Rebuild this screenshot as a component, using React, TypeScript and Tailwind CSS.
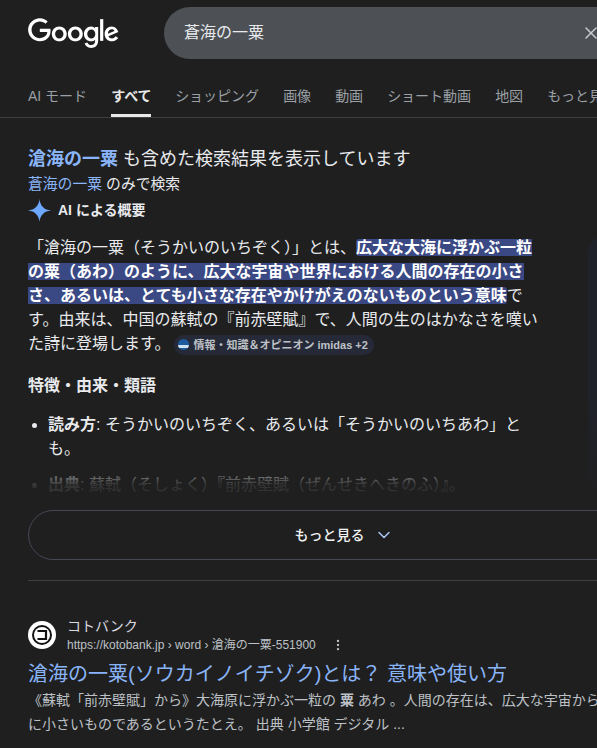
import React from "react";
import { X, ChevronDown, EllipsisVertical } from "lucide-react";

const tabs = ["ショッピング", "画像", "動画", "ショート動画", "地図", "もっと見る"];

function Logo() {
  return (
    <svg viewBox="0 0 272 92" className="w-[91px] h-[31px] shrink-0" fill="#fff">
      <path d="M115.75 47.18c0 12.77-9.99 22.18-22.25 22.18s-22.25-9.41-22.25-22.18C71.25 34.32 81.24 25 93.5 25s22.25 9.32 22.25 22.18zm-9.74 0c0-7.98-5.79-13.44-12.51-13.44S80.99 39.2 80.99 47.18c0 7.9 5.79 13.44 12.51 13.44s12.51-5.55 12.51-13.44z" />
      <path d="M163.75 47.18c0 12.77-9.99 22.18-22.25 22.18s-22.25-9.41-22.25-22.18c0-12.85 9.99-22.18 22.25-22.18s22.25 9.32 22.25 22.18zm-9.74 0c0-7.98-5.79-13.44-12.51-13.44s-12.51 5.46-12.51 13.44c0 7.9 5.79 13.44 12.51 13.44s12.51-5.55 12.51-13.44z" />
      <path d="M209.75 26.34v39.82c0 16.38-9.66 23.07-21.08 23.07-10.75 0-17.22-7.19-19.66-13.07l8.48-3.53c1.51 3.61 5.21 7.87 11.17 7.87 7.31 0 11.84-4.51 11.84-13v-3.19h-.34c-2.18 2.69-6.38 5.04-11.68 5.04-11.09 0-21.25-9.66-21.25-22.09 0-12.52 10.16-22.26 21.25-22.26 5.29 0 9.49 2.35 11.68 4.96h.34v-3.61h9.25zm-8.56 20.92c0-7.81-5.21-13.52-11.84-13.52-6.72 0-12.35 5.71-12.35 13.52 0 7.73 5.63 13.36 12.35 13.36 6.63 0 11.84-5.63 11.84-13.36z" />
      <path d="M225 3v65h-9.5V3h9.5z" />
      <path d="M262.02 54.48l7.56 5.04c-2.44 3.61-8.32 9.83-18.48 9.83-12.6 0-22.01-9.74-22.01-22.18 0-13.19 9.49-22.18 20.92-22.18 11.51 0 17.14 9.16 18.98 14.11l1.01 2.52-29.65 12.28c2.27 4.45 5.8 6.72 10.75 6.72 4.96 0 8.4-2.44 10.92-6.14zm-23.27-7.98l19.82-8.23c-1.09-2.77-4.37-4.7-8.23-4.7-4.95 0-11.84 4.37-11.59 12.93z" />
      <path d="M35.29 41.41V32H67c.31 1.64.47 3.58.47 5.68 0 7.06-1.93 15.79-8.15 22.01-6.05 6.3-13.78 9.66-24.02 9.66C16.32 69.35.36 53.89.36 34.91.36 15.93 16.32.47 35.3.47c10.5 0 17.98 4.12 23.6 9.49l-6.64 6.64c-4.03-3.78-9.49-6.72-16.97-6.72-13.86 0-24.7 11.17-24.7 25.03 0 13.86 10.84 25.03 24.7 25.03 8.99 0 14.11-3.61 17.39-6.89 2.66-2.66 4.41-6.46 5.1-11.65l-22.49.01z" />
    </svg>
  );
}

export default function App() {
  const hl = "bg-[#3a4883] text-white font-bold rounded-[3px]";
  return (
    <div className="w-[597px] h-[748px] overflow-hidden bg-[#1f1f1f] text-[#e8eaed] font-['Liberation_Sans','Noto_Sans_CJK_JP',sans-serif]">
      <header className="w-[800px] flex items-center pt-[7px] pl-[28px]">
        <Logo />
        <div className="ml-[45px] w-[560px] h-[52px] rounded-l-[26px] bg-[#4d5156] flex items-center pl-[20px] text-[16px] text-[#e8eaed]">
          <span>蒼海の一粟</span>
          <X className="ml-[317px] w-[20px] h-[20px] text-[#c8c9cb]" strokeWidth={1.8} />
        </div>
      </header>

      <nav className="w-[800px] mt-[20px] h-[31px] border-b border-[#3c4043] pl-[28px] flex gap-[24px] text-[14px] leading-[20px] text-[#9aa0a6] pt-[7px] box-content">
        <span className="h-[31px] whitespace-nowrap">AI モード</span>
        <span className="relative w-[40px] h-[31px] whitespace-nowrap font-bold text-[#e8e8e8]">
          すべて
          <span className="absolute left-0 right-0 top-[28px] h-[3px] bg-[#e8e8e8]" />
        </span>
        {tabs.map((t) => (
          <span key={t} className="h-[31px] whitespace-nowrap">{t}</span>
        ))}
      </nav>

      <main className="pl-[28px] w-[800px]">
        <p className="mt-[29px] text-[18px] leading-[24px] text-[#e8eaed]">
          <span className="font-bold text-[#8ab4f8]">滄海の一粟</span> も含めた検索結果を表示しています
        </p>
        <p className="mt-[2px] text-[14.8px] leading-[22px]">
          <span className="text-[#8ab4f8]">蒼海の一粟</span> のみで検索
        </p>
        <div className="mt-[2px] flex items-center h-[26px] gap-[7px]">
          <svg viewBox="0 0 24 24" className="w-[23px] h-[23px]" fill="#6ea8fe">
            <path d="M12 0C12.6 7 17 11.400 24 12 17 12.600 12.600 17 12 24 11.400 17 7 12.600 0 12 7 11.400 11.400 7 12 0Z" />
          </svg>
          <span className="text-[14px] font-bold text-[#e8eaed]">AI による概要</span>
        </div>

        <div className="flex">
          <div className="relative w-[512px] h-[287px] overflow-hidden shrink-0">
            <p className="mt-[13px] text-[16px] leading-[24px]">
              「滄海の一粟（そうかいのいちぞく）」とは、
              <span className={hl}>広大な大海に浮かぶ一粒の粟（あわ）のように、広大な宇宙や世界における人間の存在の小ささ、あるいは、とても小さな存在やかけがえのないものという意味</span>
              です。由来は、中国の蘇軾の『前赤壁賦』で、人間の生のはかなさを嘆いた詩に登場します。
              <span className="inline-flex items-center align-middle ml-[4px] h-[20px] rounded-full bg-[#262a38] pl-[4px] pr-[6px] gap-[4px] text-[11px] font-bold text-[#bdc1c6]">
                <span className="w-[11px] h-[11px] rounded-full bg-[#1c5b9e] flex items-end overflow-hidden">
                  <span className="w-full h-[3px] mb-[2px] bg-[#cfe2f5]" />
                </span>
                情報・知識＆オピニオン imidas +2
              </span>
            </p>
            <p className="mt-[18px] text-[16px] leading-[24px] font-bold">特徴・由来・類語</p>
            <ul className="mt-[15px] list-disc pl-[20px] text-[16px] leading-[24px]">
              <li>
                <b>読み方</b>: そうかいのいちぞく、あるいは「そうかいのいちあわ」とも。
              </li>
              <li className="mt-[12px]">
                <b>出典</b>: 蘇軾（そしょく）『前赤壁賦（ぜんせきへきのふ）』。
              </li>
            </ul>
            <div className="absolute left-0 right-0 bottom-0 h-[50px] bg-gradient-to-b from-[#1f1f1f00] to-[#1f1f1fe6] to-50%" />
          </div>
          <div className="ml-[48px] mt-[14px] w-[200px] h-[263px] rounded-tl-[16px] bg-gradient-to-b from-[#1f222a] from-60% to-[#1f1f1f]" />
        </div>

        <button className="w-[632px] h-[50px] rounded-full border border-[#444857] flex items-center justify-center gap-[9px] text-[14px] font-medium text-[#f1f3f4]">
          もっと見る
          <ChevronDown className="w-[20px] h-[20px] text-[#a8c7fa]" strokeWidth={1.8} />
        </button>
        <div className="mt-[20px] h-px bg-[#3c4043]" />

        <div className="mt-[35px] flex items-center gap-[11px]">
          <svg viewBox="0 0 28 28" className="w-[28px] h-[28px] shrink-0">
            <circle cx="14" cy="14" r="14" fill="#fff" />
            <circle cx="14" cy="14" r="10" fill="#111" />
            <circle cx="14" cy="14" r="8" fill="#fff" />
            <path d="M9.500 10H18V18H9.500" fill="none" stroke="#111" strokeWidth="2.200" />
          </svg>
          <div>
            <div className="text-[14px] leading-[20px] text-[#dadce0]">コトバンク</div>
            <div className="flex items-center text-[12px] leading-[18px] text-[#bdc1c6]">
              https://kotobank.jp › word › 滄海の一粟-551900
              <EllipsisVertical className="ml-[15px] w-[14px] h-[14px]" />
            </div>
          </div>
        </div>
        <h3 className="mt-[7px] text-[20px] leading-[26px] text-[#8ab4f8] whitespace-nowrap">滄海の一粟(ソウカイノイチゾク)とは？ 意味や使い方</h3>
        <p className="mt-[1px] text-[14px] leading-[24px] text-[#bdc1c6] whitespace-nowrap">
          《蘇軾「前赤壁賦」から》大海原に浮かぶ一粒の <b>粟</b> あわ 。人間の存在は、広大な宇宙から見れば
          <br />
          に小さいものであるというたとえ。 出典 小学館 デジタル ...
        </p>
      </main>
    </div>
  );
}
